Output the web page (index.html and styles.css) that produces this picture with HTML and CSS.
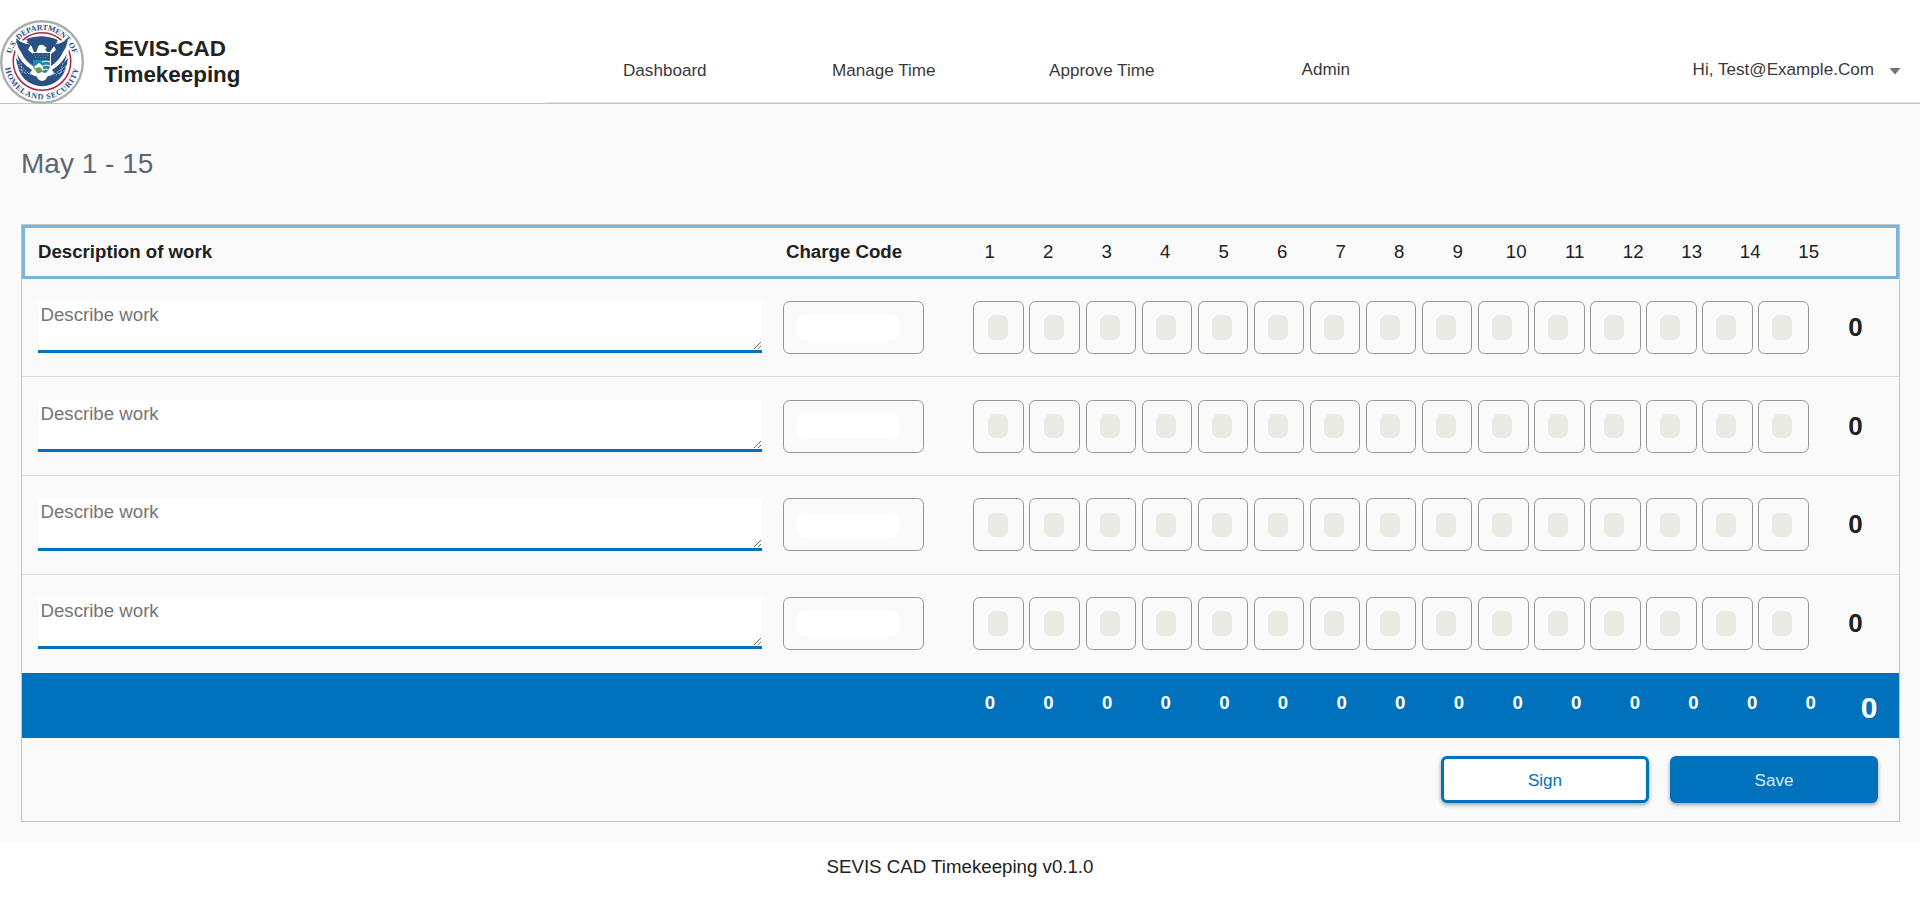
FILE: index.html
```
<!DOCTYPE html>
<html lang="en">
<head>
<meta charset="utf-8">
<title>SEVIS-CAD Timekeeping</title>
<link rel="stylesheet" href="styles.css">
</head>
<body>
<header class="header">
  <div class="brand">
    <svg class="seal" viewBox="0 0 84 84" role="img" aria-label="U.S. Department of Homeland Security">
      <defs>
        <path id="arc-top" d="M11.5 50 A31.6 31.6 0 1 1 72.5 50"/>
        <path id="arc-bottom" d="M5.2 36 A37.3 37.3 0 1 0 78.8 36"/>
      </defs>
      <circle cx="42" cy="42" r="40.8" fill="#fff" stroke="#adadad" stroke-width="2.4"/>
      <circle cx="42" cy="41.5" r="28.8" fill="#fff" stroke="#b5243c" stroke-width="1.5"/>
      <circle cx="42" cy="41.5" r="24.7" fill="#295184"/>
      <path fill="#fff" d="M16 17 L24 21 31 25 34 28 42 31 50 28 53 25 60 21 68 17 69 30 66 38 69 40 67 47 59 51 55 54 50 55 42 60 34 55 29 54 25 51 17 47 15 40 18 38 15 30Z"/>
      <path fill="#295184" d="M16 18 Q23 25 31 24 L28 30 33 34 33 46 Q25 41 21 32 Q17 27 16 18ZM68 18 Q61 25 53 24 L56 30 51 34 51 46 Q59 41 63 32 Q67 27 68 18ZM17 33 Q20 42 32 50 L30 54 Q19 47 17 33ZM67 33 Q64 42 52 50 L54 54 Q65 47 67 33Z"/>
      <path fill="#295184" d="M26 19 Q42 13 58 20 L54 26 50 32 H34 L31 25Z"/>
      <path fill="#fff" d="M38 27 Q39 24 43 25 L47 28 45 29 48 33 H36Z"/>
      <path fill="#295184" d="M33 33h17v7H33z"/>
      <path stroke="#8ca3c1" stroke-width=".8" stroke-dasharray="1 1.6" d="M34 35h15M35 37.5h13"/>
      <path fill="#2588ad" d="M33 40h17v7l-3 5-5 3-6-3-3-5z"/>
      <path fill="#fff" d="M34 47l5-4 4 3v5l-5 1z"/>
      <path fill="#669e3e" d="M34 49l5-2 3 2v4l-6-1z"/>
      <path stroke="#fff" fill="none" d="M42 42q3-2 8 0M43 46q3-2 7 0M43 50q3-2 5 0"/>
      <path fill="#fff" d="M30 52l5-3 2 5 5-2 5 2 2-5 5 3-4 4-3 0a5 5 0 0 1-10 0l-3 0z"/>
      <path fill="#295184" d="M16 38l6 7 8 7-5 4Q17 50 16 38ZM68 38l-6 7-8 7 5 4Q67 50 68 38Z"/>
      <path stroke="#c5d2e1" stroke-width=".8" fill="none" stroke-dasharray="2 1" d="M18 44l10 9M19 49l8 5M21 43l1 10M66 46l-10 7M65 50l-9 5M63 43l-3 11"/>
      <text class="seal-text seal-top"><textPath href="#arc-top" startOffset="50%" text-anchor="middle">U.S. DEPARTMENT OF</textPath></text>
      <text class="seal-text seal-bottom"><textPath href="#arc-bottom" startOffset="50%" text-anchor="middle">HOMELAND SECURITY</textPath></text>
    </svg>
    <div class="brand-name">SEVIS-CAD<br>Timekeeping</div>
  </div>
  <nav class="nav">
    <a class="nav-item dashboard">Dashboard</a>
    <a class="nav-item manage">Manage Time</a>
    <a class="nav-item approve">Approve Time</a>
    <a class="nav-item admin">Admin</a>
    <a class="nav-item user">Hi, Test@Example.Com<span class="caret"></span></a>
  </nav>
</header>
<main class="main">
  <h1 class="period">May 1 - 15</h1>
  <section class="card">
    <div class="card-head">
      <div class="head-desc">Description of work</div>
      <div class="head-code">Charge Code</div>
      <div class="head-days" id="head-days"></div>
    </div>
    <div id="rows"></div>
    <div class="totals"><div class="total-days" id="total-days"></div><div class="grand">0</div></div>
    <div class="actions">
      <button class="btn btn-sign">Sign</button>
      <button class="btn btn-save">Save</button>
    </div>
  </section>
</main>
<footer class="footer">SEVIS CAD Timekeeping v0.1.0</footer>
<script src="app.js"></script>
</body>
</html>
```
FILE: styles.css
```
* { box-sizing: border-box; }
body {
  margin: 0;
  background: #fff;
  color: #212121;
  font-family: "Liberation Sans", Arial, sans-serif;
  font-size: 17.1px;
}
.header {
  display: flex;
  height: 104px;
  padding-top: 20px;
  border-bottom: 1px solid #c4c4c4;
}
.brand { display: flex; width: 546px; flex: none; }
.seal { width: 84px; height: 84px; flex: none; }
.seal-text {
  font-family: "Liberation Serif", serif;
  font-size: 8px;
  font-weight: bold;
  fill: #295184;
}
.seal-top { letter-spacing: -.1px; }
.seal-bottom { letter-spacing: .8px; }
.brand-name {
  padding: 16px 0 0 20px;
  font-size: 22.4px;
  line-height: 26px;
  font-weight: bold;
}
.nav {
  display: flex;
  flex: 1;
  border-bottom: 1px solid #e0e0e0;
  color: #393939;
  line-height: 20px;
}
.nav-item { padding-top: 41px; white-space: nowrap; }
.dashboard { width: 209px; padding-left: 77px; }
.manage { width: 217px; padding-left: 77px; }
.approve { width: 253px; padding-left: 77px; }
.admin { padding-top: 40px; padding-left: 76.5px; }
.user {
  display: flex;
  margin-left: auto;
  padding: 40px 19px 0 0;
}
.caret {
  width: 12px;
  height: 7px;
  margin: 7.5px 0 0 15px;
  background: #757575;
  clip-path: polygon(0 0, 100% 0, 50% 100%);
}
.main {
  height: 739px;
  padding: 44px 20px 0 21px;
  background: #fafafa;
}
.period {
  height: 76px;
  margin: 0;
  color: #5b6778;
  font-size: 28px;
  line-height: 32px;
  font-weight: normal;
}
.card {
  height: 598px;
  border: 1px solid #c4c4c4;
}
.card-head {
  display: flex;
  height: 53.67px;
  padding-left: 13px;
  border: 3px solid #78b7da;
  font-size: 18.67px;
  line-height: 48px;
}
.head-desc { width: 748px; font-weight: bold; }
.head-code { width: 174.5px; font-weight: bold; }
.head-days { display: grid; grid-template-columns: repeat(15, 58.5px); text-align: center; }
.row {
  display: flex;
  height: 98.67px;
  padding: 22.2px 0 0 16px;
  border-bottom: 1px solid #dcdcdc;
}
.row:last-child { border-bottom-color: transparent; }
.desc {
  display: block;
  width: 724px;
  height: 51.92px;
  margin: .7px 21px 0 0;
  padding: 2.4px 2.5px;
  border: 0;
  border-bottom: 3px solid #0071bc;
  background: #fff;
  font: 18.67px "Liberation Sans", Arial, sans-serif;
}
.desc::placeholder { color: #757575; }
.code {
  width: 141px;
  height: 53.3px;
  margin-right: 49.4px;
  padding: 13.35px 13px;
  border: 1px solid #949494;
  border-radius: 6.5px;
}
.code-value { width: 102px; height: 24.55px; border-radius: 7px; background: #fff; }
.days { display: grid; width: 840.6px; grid-template-columns: repeat(15, 56.07px); }
.day {
  width: 50.6px;
  height: 53.3px;
  padding: 13.35px 13.22px;
  border: 1px solid #949494;
  border-radius: 6.5px;
}
.day-value { width: 20px; height: 24.55px; border-radius: 7px; background: #e9eae4; }
.row-total {
  width: 83px;
  font-size: 26px;
  font-weight: bold;
  line-height: 52px;
  text-align: center;
}
.totals {
  display: flex;
  height: 64.67px;
  padding-left: 938.5px;
  background: #0071bc;
  color: #fff;
  font-weight: bold;
}
.total-days {
  display: grid;
  grid-template-columns: repeat(15, 58.65px);
  font-size: 18.67px;
  line-height: 60px;
  text-align: center;
}
.grand { width: 58px; font-size: 30px; line-height: 70px; text-align: center; }
.actions {
  display: flex;
  justify-content: flex-end;
  gap: 21px;
  padding: 18px 21px 0 0;
}
.btn {
  width: 208px;
  height: 47px;
  padding: 3px 0 0;
  border: 3px solid #0071bc;
  border-radius: 6px;
  box-shadow: 0 2px 4px rgba(0, 0, 0, .35);
  font: 17.1px "Liberation Sans", Arial, sans-serif;
}
.btn-sign { background: #fff; color: #0071bc; }
.btn-save { background: #0071bc; color: #dcebf6; }
.footer {
  padding-top: 14px;
  font-size: 18.7px;
  line-height: 20px;
  text-align: center;
}
```
FILE: app.js
```
const repeat = (count, render) => Array.from({ length: count }, (_, i) => render(i + 1)).join("");

document.getElementById("head-days").innerHTML = repeat(15, (day) => `<span>${day}</span>`);
document.getElementById("total-days").innerHTML = repeat(15, () => "<span>0</span>");
document.getElementById("rows").innerHTML = repeat(4, () => `
  <div class="row">
    <textarea class="desc" placeholder="Describe work"></textarea>
    <div class="code"><div class="code-value"></div></div>
    <div class="days">${repeat(15, () => '<div class="day"><div class="day-value"></div></div>')}</div>
    <div class="row-total">0</div>
  </div>`);
```
